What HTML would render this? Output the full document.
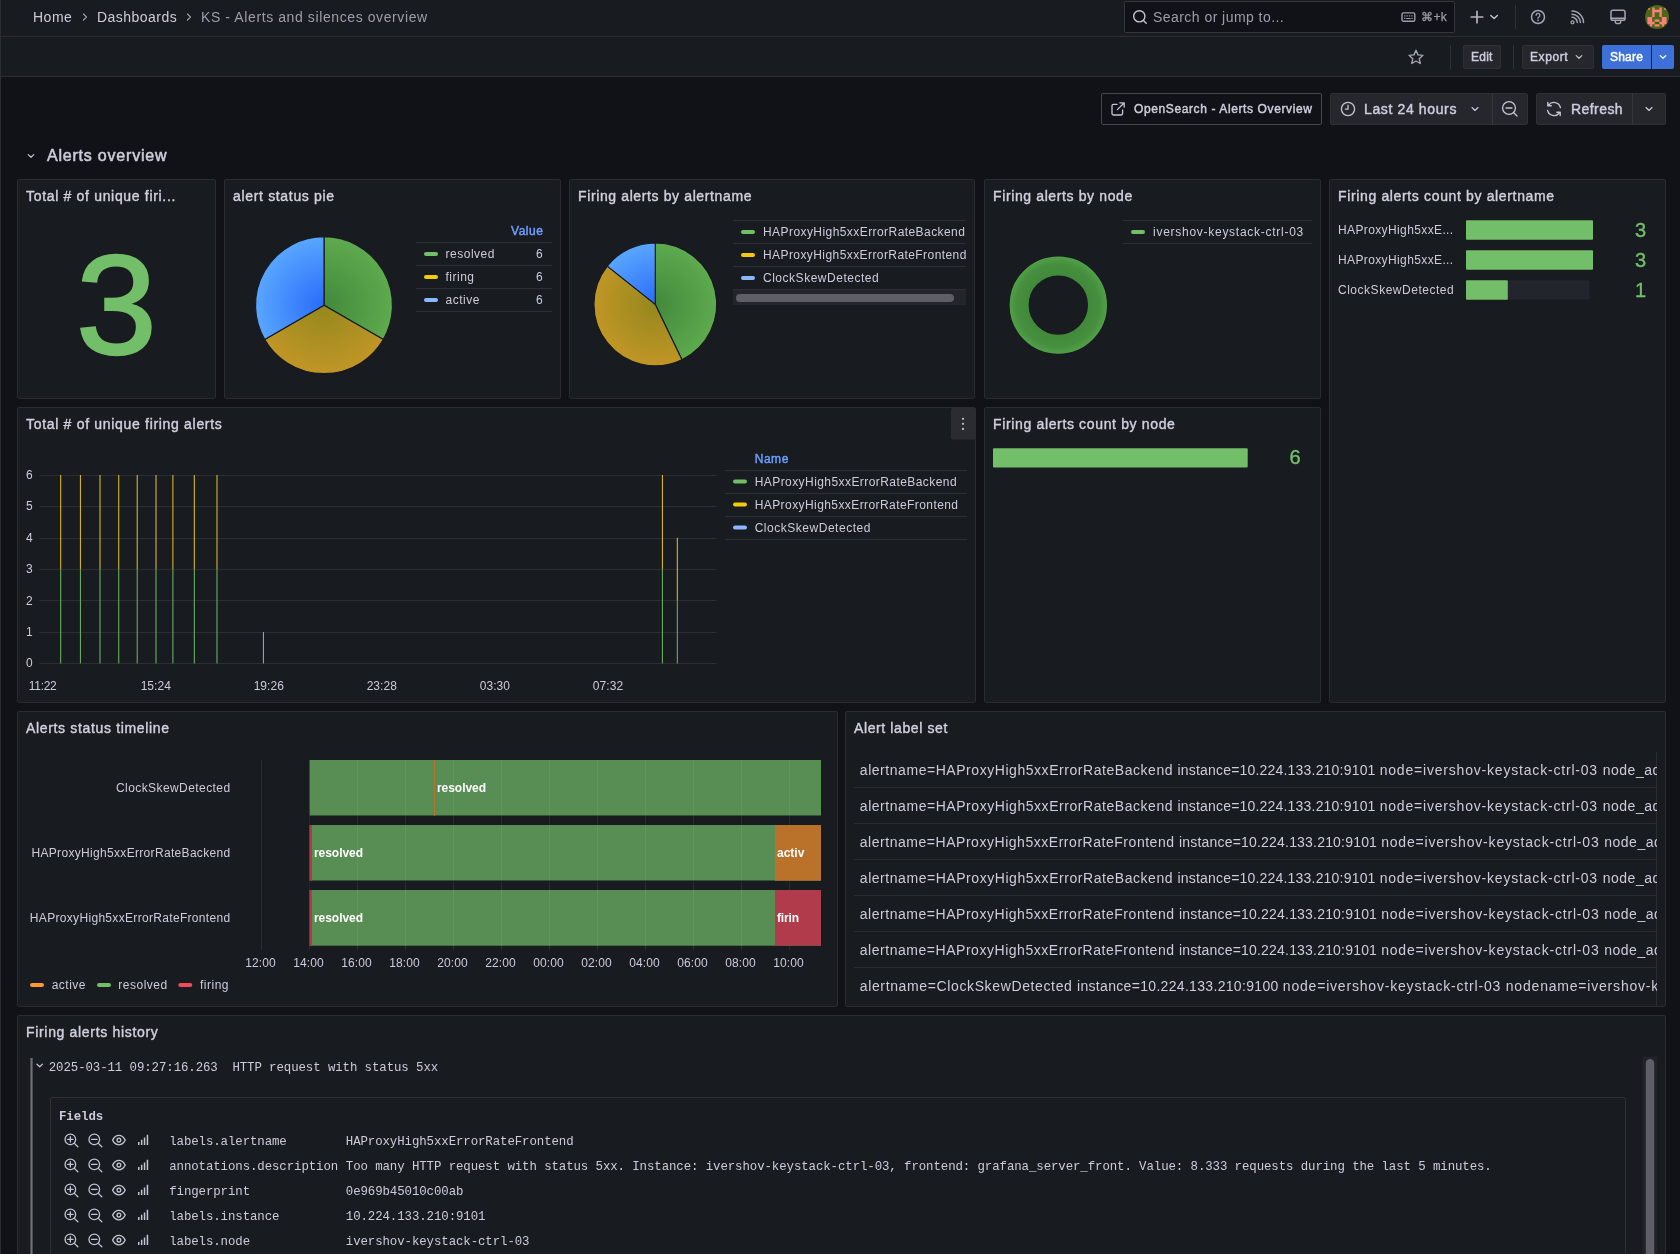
<!DOCTYPE html>
<html lang="en">
<head>
<meta charset="utf-8">
<title>KS - Alerts and silences overview</title>
<style>
*{box-sizing:border-box;margin:0;padding:0}
html,body{width:1680px;height:1254px;overflow:hidden;background:#111217;color:#ccccdc;
  font-family:"Liberation Sans",sans-serif;font-size:14px}
#root{position:relative;width:1680px;height:1254px;overflow:hidden;will-change:transform}
#leftline{position:absolute;left:0;top:0;width:1px;height:1254px;background:#2b2d33}
#topbar{position:absolute;left:1px;top:0;width:1679px;height:37px;background:#181b1f;border-bottom:1px solid #2c2e34}
#subbar{position:absolute;left:1px;top:37px;width:1679px;height:40px;background:#181b1f;border-bottom:1px solid #2c2e34}
.t{position:absolute;white-space:nowrap;line-height:1;color:#ccccdc}
.m{-webkit-text-stroke:0.450px currentColor}
.sec{color:#9d9eab}
.panel{position:absolute;background:#181b1f;border:1px solid #2a2c32;border-radius:2px;overflow:hidden}
.ptitle{position:absolute;left:8px;top:8px;font-size:14px;color:#d0d0de;white-space:nowrap;line-height:16px;-webkit-text-stroke:0.4px currentColor;letter-spacing:0.45px}
.btn{position:absolute;background:#25272d;border-radius:2px;border:1px solid #2e3036}
.vsep{position:absolute;width:1px;background:#2f3137}
svg{position:absolute;overflow:visible}
.ic{fill:none;stroke:#c4c5d4;stroke-width:1.4;stroke-linecap:round;stroke-linejoin:round}
.lr{letter-spacing:0.53px}
.mono{font-family:"Liberation Mono",monospace}
</style>
</head>
<body>
<div id="root">
<div id="leftline"></div>
<div id="topbar"></div>
<div id="subbar"></div>
<!-- breadcrumbs -->
<div class="t" style="left:33px;top:10px;font-size:14px;letter-spacing:0.5px">Home</div>
<svg style="left:80px;top:12px" width="10" height="10" viewBox="0 0 10 10"><path class="ic" style="stroke:#9d9eab;stroke-width:1.2" d="M3.5 2 L6.5 5 L3.5 8"/></svg>
<div class="t" style="left:97px;top:10px;font-size:14px;letter-spacing:0.47px">Dashboards</div>
<svg style="left:184px;top:12px" width="10" height="10" viewBox="0 0 10 10"><path class="ic" style="stroke:#9d9eab;stroke-width:1.2" d="M3.5 2 L6.5 5 L3.5 8"/></svg>
<div class="t sec" style="left:201px;top:10px;font-size:14px;letter-spacing:0.6px">KS - Alerts and silences overview</div>
<!-- search -->
<div style="position:absolute;left:1124px;top:1px;width:331px;height:32px;background:#111217;border:1px solid #34363d;border-radius:2px"></div>
<svg style="left:1132px;top:9px" width="16" height="16" viewBox="0 0 16 16"><circle class="ic" cx="7.3" cy="7.3" r="5.6"/><path class="ic" d="M11.5 11.5 L14.2 14.2"/></svg>
<div class="t sec" style="left:1153px;top:10px;font-size:14px;letter-spacing:0.45px">Search or jump to...</div>
<svg style="left:1400.600px;top:11px" width="16" height="12" viewBox="0 0 16 12"><rect class="ic" style="stroke:#9d9eab;stroke-width:1.400" x="1" y="1.900" width="12.800" height="8.400" rx="1.600"/><path class="ic" style="stroke:#9d9eab;stroke-width:1.100" d="M3.600 4.900h0.400M5.900 4.900h0.400M8.300 4.900h0.400M10.700 4.900h0.400M3.600 7.400h0.300M10.900 7.400h0.300M5.600 7.500h3.600"/></svg>
<div class="t sec" style="left:1421.400px;top:11px;font-size:12px;-webkit-text-stroke:0.250px currentColor;letter-spacing:0.23px">&#8984;+k</div>
<!-- plus -->
<svg style="left:0;top:0" width="1680" height="36" viewBox="0 0 1680 36"><g fill="none" stroke="#a3a4b1" stroke-width="1.500" stroke-linecap="round" stroke-linejoin="round">
<path stroke="#b4b5c3" stroke-width="1.700" d="M1477 11.300v11.400M1471.300 17h11.400"/>
<path stroke="#c4c5d4" stroke-width="1.400" d="M1490.800 15.400 L1494.100 18.600 L1497.400 15.400"/>
<circle cx="1538" cy="17" r="6.500"/>
<path stroke-width="1.300" d="M1536.100 15.300a1.900 1.900 0 1 1 2.800 1.700c-.6.300-.9.700-.9 1.300"/>
<circle cx="1572.500" cy="22.300" r="1.500" stroke-width="1.300"/>
<path stroke-width="1.500" d="M1572 17.300a5.300 5.300 0 0 1 5.300 5.300M1572 14.200a8.400 8.400 0 0 1 8.400 8.400M1572 11.100a11.500 11.500 0 0 1 11.500 11.500"/>
<rect x="1611" y="10.300" width="14" height="10" rx="1.800"/>
<path d="M1611 18.200h14M1615.300 20.500v1.600a1.300 1.300 0 0 0 1.300 1.300h2.800a1.300 1.300 0 0 0 1.300-1.300v-1.600"/>
</g><circle cx="1538" cy="20.400" r="0.850" fill="#a3a4b1"/></svg>
<div class="vsep" style="left:1515px;top:5px;height:24px"></div>
<!-- avatar -->
<svg style="left:1645px;top:5px" width="24" height="24" viewBox="0 0 24 24"><defs><clipPath id="avc"><circle cx="12" cy="12" r="12"/></clipPath></defs><g clip-path="url(#avc)"><rect width="24" height="24" fill="#4b6717"/><path fill="#2f6900" d="M9.600 16.800h4.800v2.400h-4.800z"/><path fill="#fa817b" d="M2.4 2.4h2.4v2.4h-2.4zM2.4 12.0h2.4v2.4h-2.4zM2.4 14.4h2.4v2.4h-2.4zM2.4 16.8h2.4v2.4h-2.4zM4.8 12.0h2.4v2.4h-2.4zM4.8 14.4h2.4v2.4h-2.4zM4.8 16.8h2.4v2.4h-2.4zM4.8 19.2h2.4v2.4h-2.4zM7.2 2.4h2.4v2.4h-2.4zM7.2 4.8h2.4v2.4h-2.4zM7.2 7.2h2.4v2.4h-2.4zM7.2 9.6h2.4v2.4h-2.4zM7.2 16.8h2.4v2.4h-2.4zM9.6 4.8h2.4v2.4h-2.4zM9.6 14.4h2.4v2.4h-2.4zM9.6 19.2h2.4v2.4h-2.4zM12.0 4.8h2.4v2.4h-2.4zM12.0 14.4h2.4v2.4h-2.4zM12.0 19.2h2.4v2.4h-2.4zM14.4 2.4h2.4v2.4h-2.4zM14.4 4.8h2.4v2.4h-2.4zM14.4 7.2h2.4v2.4h-2.4zM14.4 9.6h2.4v2.4h-2.4zM14.4 16.8h2.4v2.4h-2.4zM16.8 12.0h2.4v2.4h-2.4zM16.8 14.4h2.4v2.4h-2.4zM16.8 16.8h2.4v2.4h-2.4zM16.8 19.2h2.4v2.4h-2.4zM19.2 2.4h2.4v2.4h-2.4zM19.2 12.0h2.4v2.4h-2.4zM19.2 14.4h2.4v2.4h-2.4zM19.2 16.8h2.4v2.4h-2.4z"/></g></svg>
<!-- subbar -->
<svg style="left:1407px;top:48px" width="18" height="18" viewBox="0 0 18 18"><path class="ic" style="stroke-width:1.4;stroke:#a3a4b1" d="M9.00 2.30L11.00 6.85L15.94 7.34L12.23 10.65L13.29 15.51L9.00 13.00L4.71 15.51L5.77 10.65L2.06 7.34L7.00 6.85Z"/></svg>
<div class="vsep" style="left:1450px;top:45px;height:24px"></div>
<div class="btn" style="left:1463px;top:45px;width:38px;height:24px"></div>
<div class="t m" style="left:1471px;top:51px;font-size:12px;letter-spacing:0.23px">Edit</div>
<div class="vsep" style="left:1513px;top:45px;height:24px"></div>
<div class="btn" style="left:1522px;top:45px;width:72px;height:24px"></div>
<div class="t m" style="left:1530px;top:51px;font-size:12px;letter-spacing:0.58px">Export</div>
<svg style="left:1574px;top:52px" width="10" height="10" viewBox="0 0 10 10"><path class="ic" style="stroke-width:1.2" d="M2.2 3.6 L5 6.3 L7.800 3.6"/></svg>
<div class="btn" style="left:1602px;top:45px;width:49px;height:24px;background:#3d71d9;border:none;border-radius:2px 0 0 2px"></div>
<div class="t m" style="left:1610px;top:51px;font-size:12px;color:#fff;letter-spacing:0.2px">Share</div>
<div class="btn" style="left:1652px;top:45px;width:22px;height:24px;background:#3d71d9;border:none;border-radius:0 2px 2px 0"></div>
<svg style="left:1658px;top:52px" width="10" height="10" viewBox="0 0 10 10"><path class="ic" style="stroke:#fff;stroke-width:1.3" d="M2.2 3.6 L5 6.3 L7.800 3.6"/></svg>
<!-- controls row -->
<div style="position:absolute;left:1101px;top:93px;width:221px;height:32px;border:1px solid #45474f;border-radius:2px"></div>
<svg style="left:1110px;top:101px" width="16" height="16" viewBox="0 0 16 16"><path class="ic" style="stroke-width:1.3" d="M12.6 9v3.600a1.4 1.400 0 0 1-1.400 1.400H3.400A1.400 1.400 0 0 1 2 12.600V4.800a1.400 1.400 0 0 1 1.400-1.400H7M9.800 1.800h4.400v4.400M14 2 7.400 8.600"/></svg>
<div class="t m" style="left:1134px;top:103px;font-size:12px;letter-spacing:0.61px">OpenSearch - Alerts Overview</div>
<div class="btn" style="left:1330px;top:93px;width:198px;height:32px"></div>
<div class="vsep" style="left:1492px;top:93px;height:32px;background:#34363d"></div>
<svg style="left:1340px;top:101px" width="16" height="16" viewBox="0 0 16 16"><circle class="ic" style="stroke-width:1.3" cx="8" cy="8" r="6.600"/><path class="ic" style="stroke-width:1.3" d="M8 4.200V8.200H5.400"/></svg>
<div class="t m" style="left:1364px;top:102px;font-size:14px;letter-spacing:0.63px">Last 24 hours</div>
<svg style="left:1470px;top:104px" width="10" height="10" viewBox="0 0 10 10"><path class="ic" style="stroke-width:1.3" d="M2 3.600 L5 6.400 L8 3.600"/></svg>
<svg style="left:1501px;top:100px" width="18" height="18" viewBox="0 0 18 18"><circle class="ic" style="stroke-width:1.3" cx="8" cy="8" r="6.400"/><path class="ic" style="stroke-width:1.3" d="M5 8h6M12.800 12.800 16 16"/></svg>
<div class="btn" style="left:1536px;top:93px;width:130px;height:32px"></div>
<div class="vsep" style="left:1632px;top:93px;height:32px;background:#34363d"></div>
<svg style="left:1545px;top:100px" width="18" height="18" viewBox="0 0 18 18"><path class="ic" style="stroke-width:1.4" d="M15.400 7.600A6.600 6.600 0 0 0 3.600 5.200M2.800 2.400v3.400h3.400M2.600 10.400a6.600 6.600 0 0 0 11.800 2.400M15.200 15.600v-3.400h-3.400"/></svg>
<div class="t m" style="left:1571px;top:102px;font-size:14px;letter-spacing:0.44px">Refresh</div>
<svg style="left:1644px;top:104px" width="10" height="10" viewBox="0 0 10 10"><path class="ic" style="stroke-width:1.3" d="M2 3.600 L5 6.400 L8 3.600"/></svg>
<!-- row title -->
<svg style="left:26px;top:151px" width="10" height="10" viewBox="0 0 10 10"><path class="ic" style="stroke-width:1.2" d="M2.200 3.600 L5 6.300 L7.800 3.600"/></svg>
<div class="t" style="-webkit-text-stroke:0.550px currentColor;left:47px;top:148px;font-size:16px;letter-spacing:0.79px">Alerts overview</div>
<div class="panel" id="p1" style="left:17px;top:179px;width:199px;height:220px"><div class="ptitle" style="letter-spacing:0.68px">Total # of unique firi...</div></div>
<div class="panel" id="p2" style="left:224px;top:179px;width:337px;height:220px"><div class="ptitle" style="letter-spacing:0.67px">alert status pie</div></div>
<div class="panel" id="p3" style="left:569px;top:179px;width:406px;height:220px"><div class="ptitle" style="letter-spacing:0.62px">Firing alerts by alertname</div></div>
<div class="panel" id="p4" style="left:984px;top:179px;width:337px;height:220px"><div class="ptitle" style="letter-spacing:0.62px">Firing alerts by node</div></div>
<div class="panel" id="p5" style="left:1329px;top:179px;width:337px;height:524px"><div class="ptitle" style="letter-spacing:0.645px">Firing alerts count by alertname</div></div>
<div class="panel" id="p6" style="left:17px;top:407px;width:959px;height:296px"><div class="ptitle" style="letter-spacing:0.69px">Total # of unique firing alerts</div></div>
<div class="panel" id="p7" style="left:984px;top:407px;width:337px;height:296px"><div class="ptitle" style="letter-spacing:0.65px">Firing alerts count by node</div></div>
<div class="panel" id="p8" style="left:17px;top:711px;width:821px;height:296px"><div class="ptitle" style="letter-spacing:0.66px">Alerts status timeline</div></div>
<div class="panel" id="p9" style="left:845px;top:711px;width:821px;height:296px"><div class="ptitle" style="letter-spacing:0.61px">Alert label set</div></div>
<div class="panel" id="p10" style="left:17px;top:1015px;width:1649px;height:260px"><div class="ptitle" style="letter-spacing:0.675px">Firing alerts history</div></div>
<!-- P1 stat -->
<div class="t" id="big3" style="left:76.300px;top:235px;font-size:141px;color:#73bf69;width:81px;text-align:center;transform:scaleX(1.03);transform-origin:50% 50%;-webkit-text-stroke:2.4px #73bf69">3</div>
<!-- P2 pie -->
<svg style="left:0;top:0" width="1680" height="420" viewBox="0 0 1680 420">
<defs>
<radialGradient id="gG2" gradientUnits="userSpaceOnUse" cx="324" cy="305.2" r="68.5"><stop offset="0" stop-color="#42893b"/><stop offset="1" stop-color="#5eaa4e"/></radialGradient>
<radialGradient id="gY2" gradientUnits="userSpaceOnUse" cx="324" cy="305.2" r="68.5"><stop offset="0" stop-color="#95871d"/><stop offset="1" stop-color="#c09626"/></radialGradient>
<radialGradient id="gB2" gradientUnits="userSpaceOnUse" cx="324" cy="305.2" r="68.5"><stop offset="0" stop-color="#2a6bfa"/><stop offset="1" stop-color="#58a6ff"/></radialGradient>
<radialGradient id="gG3" gradientUnits="userSpaceOnUse" cx="655.3" cy="304.4" r="61.4"><stop offset="0" stop-color="#42893b"/><stop offset="1" stop-color="#5eaa4e"/></radialGradient>
<radialGradient id="gY3" gradientUnits="userSpaceOnUse" cx="655.3" cy="304.4" r="61.4"><stop offset="0" stop-color="#95871d"/><stop offset="1" stop-color="#c09626"/></radialGradient>
<radialGradient id="gB3" gradientUnits="userSpaceOnUse" cx="655.3" cy="304.4" r="61.4"><stop offset="0" stop-color="#2a6bfa"/><stop offset="1" stop-color="#58a6ff"/></radialGradient>
<radialGradient id="gD4" gradientUnits="userSpaceOnUse" cx="1058.1" cy="305.2" r="48.8"><stop offset="0.62" stop-color="#418a3b"/><stop offset="0.85" stop-color="#468f3f"/><stop offset="1" stop-color="#52a048"/></radialGradient>
</defs>
<g stroke="#181b1f" stroke-width="1.2" stroke-linejoin="round">
<path fill="url(#gG2)" d="M324 305.2L324.00 236.70A68.5 68.5 0 0 1 383.32 339.45Z"/>
<path fill="url(#gY2)" d="M324 305.2L383.32 339.45A68.5 68.5 0 0 1 264.68 339.45Z"/>
<path fill="url(#gB2)" d="M324 305.2L264.68 339.45A68.5 68.5 0 0 1 324.00 236.70Z"/>
<path fill="url(#gG3)" d="M655.3 304.4L655.30 243.00A61.4 61.4 0 0 1 681.94 359.72Z"/>
<path fill="url(#gY3)" d="M655.3 304.4L681.94 359.72A61.4 61.4 0 0 1 607.30 266.12Z"/>
<path fill="url(#gB3)" d="M655.3 304.4L607.30 266.12A61.4 61.4 0 0 1 655.30 243.00Z"/>
</g>
<circle cx="1058.300" cy="305.100" r="39.200" fill="none" stroke="url(#gD4)" stroke-width="19"/>
<!-- legend lines -->
<g stroke="#2d2f35" stroke-width="1">
<path d="M416 242.5H552M416 265.5H552M416 288.5H552M416 311.5H552"/>
<path d="M733 220.5H966M733 243.5H966M733 266.5H966M733 289.5H966"/>
<path d="M1123 220.5H1312M1123 243.5H1312"/>
</g>
<!-- legend markers -->
<g>
<rect x="424" y="252" width="14" height="4" rx="2" fill="#73bf69"/>
<rect x="424" y="275" width="14" height="4" rx="2" fill="#f2cc0c"/>
<rect x="424" y="298" width="14" height="4" rx="2" fill="#8ab8ff"/>
<rect x="741" y="230" width="14" height="4" rx="2" fill="#73bf69"/>
<rect x="741" y="253" width="14" height="4" rx="2" fill="#f2cc0c"/>
<rect x="741" y="276" width="14" height="4" rx="2" fill="#8ab8ff"/>
<rect x="1131" y="230" width="14" height="4" rx="2" fill="#73bf69"/>
</g>
<!-- p3 scrollbar -->
<rect x="733" y="290" width="233" height="15" fill="#22252a"/>
<rect x="736" y="294" width="218" height="8" rx="4" fill="#5e5f66"/>
<!-- P5 bars -->
<rect x="1466" y="220.300" width="127" height="19.400" rx="1" fill="#73bf69"/>
<rect x="1466" y="250.300" width="127" height="19.400" rx="1" fill="#73bf69"/>
<rect x="1466" y="280.300" width="123.600" height="19.400" rx="1" fill="#22252b"/>
<rect x="1466" y="280.300" width="41.800" height="19.400" rx="1" fill="#73bf69"/>
</svg>
<!-- P2 legend text -->
<div class="t m" style="left:511px;top:225px;font-size:12px;color:#6e9fff;letter-spacing:0.54px">Value</div>
<div class="t" style="left:445.500px;top:248px;font-size:12px;letter-spacing:0.51px">resolved</div>
<div class="t" style="left:445.500px;top:271px;font-size:12px;letter-spacing:0.5px">firing</div>
<div class="t" style="left:445.500px;top:294px;font-size:12px;letter-spacing:0.5px">active</div>
<div class="t" style="left:536px;top:248px;font-size:12px">6</div>
<div class="t" style="left:536px;top:271px;font-size:12px">6</div>
<div class="t" style="left:536px;top:294px;font-size:12px">6</div>
<!-- P3 legend text -->
<div class="t" style="left:763px;top:226px;font-size:12px;letter-spacing:0.43px">HAProxyHigh5xxErrorRateBackend</div>
<div class="t" style="left:763px;top:249px;font-size:12px;letter-spacing:0.42px">HAProxyHigh5xxErrorRateFrontend</div>
<div class="t" style="left:763px;top:272px;font-size:12px;letter-spacing:0.52px">ClockSkewDetected</div>
<!-- P4 legend text -->
<div class="t" style="left:1153px;top:226px;font-size:12px;letter-spacing:0.73px">ivershov-keystack-ctrl-03</div>
<!-- P5 labels -->
<div class="t" style="left:1338px;top:224px;font-size:12px;letter-spacing:0.38px">HAProxyHigh5xxE...</div>
<div class="t" style="left:1338px;top:254px;font-size:12px;letter-spacing:0.38px">HAProxyHigh5xxE...</div>
<div class="t" style="left:1338px;top:284px;font-size:12px;letter-spacing:0.52px">ClockSkewDetected</div>
<div class="t" style="left:1625px;top:219.500px;font-size:20px;color:#73bf69;-webkit-text-stroke:0.4px #73bf69;width:21px;text-align:right">3</div>
<div class="t" style="left:1625px;top:249.500px;font-size:20px;color:#73bf69;-webkit-text-stroke:0.4px #73bf69;width:21px;text-align:right">3</div>
<div class="t" style="left:1625px;top:279.500px;font-size:20px;color:#73bf69;-webkit-text-stroke:0.4px #73bf69;width:21px;text-align:right">1</div>
<!-- P6 timeseries -->
<svg style="left:0;top:0" width="1680" height="710" viewBox="0 0 1680 710">
<path d="M39.500 663.5H716.500M39.500 632.5H716.500M39.500 600.5H716.500M39.500 569.5H716.500M39.500 538.5H716.500M39.500 506.5H716.500M39.500 475.5H716.500" stroke="#2c2e34" stroke-width="1" fill="none"/>
<rect x="60.20" y="569.20" width="1" height="94.20" fill="#70bb66"/>
<rect x="60.20" y="475.00" width="1" height="94.20" fill="#e6c42a"/>
<rect x="79.90" y="569.20" width="1" height="94.20" fill="#70bb66"/>
<rect x="79.90" y="475.00" width="1" height="94.20" fill="#e6c42a"/>
<rect x="99.50" y="569.20" width="1" height="94.20" fill="#70bb66"/>
<rect x="99.50" y="475.00" width="1" height="94.20" fill="#e6c42a"/>
<rect x="118.25" y="569.20" width="1" height="94.20" fill="#70bb66"/>
<rect x="118.25" y="475.00" width="1" height="94.20" fill="#e6c42a"/>
<rect x="136.70" y="569.20" width="1" height="94.20" fill="#70bb66"/>
<rect x="136.70" y="475.00" width="1" height="94.20" fill="#e6c42a"/>
<rect x="155.50" y="569.20" width="1" height="94.20" fill="#70bb66"/>
<rect x="155.50" y="475.00" width="1" height="94.20" fill="#e6c42a"/>
<rect x="172.40" y="569.20" width="1" height="94.20" fill="#70bb66"/>
<rect x="172.40" y="475.00" width="1" height="94.20" fill="#e6c42a"/>
<rect x="193.80" y="569.20" width="1" height="94.20" fill="#70bb66"/>
<rect x="193.80" y="475.00" width="1" height="94.20" fill="#e6c42a"/>
<rect x="216.50" y="569.20" width="1" height="94.20" fill="#70bb66"/>
<rect x="216.50" y="475.00" width="1" height="94.20" fill="#e6c42a"/>
<rect x="262.9" y="632.00" width="1" height="31.40" fill="#84b1f6"/>
<rect x="661.9" y="569.20" width="1" height="94.20" fill="#70bb66"/>
<rect x="661.9" y="475.00" width="1" height="94.20" fill="#e6c42a"/>
<rect x="676.8" y="600.60" width="1" height="62.80" fill="#70bb66"/>
<rect x="676.8" y="537.80" width="1" height="62.80" fill="#e6c42a"/>
<path d="M725 470.500H967M725 493.500H967M725 516.500H967M725 539.500H967" stroke="#2d2f35" stroke-width="1" fill="none"/>
<rect x="733" y="479.500" width="14" height="4" rx="2" fill="#73bf69"/>
<rect x="733" y="502.500" width="14" height="4" rx="2" fill="#f2cc0c"/>
<rect x="733" y="525.500" width="14" height="4" rx="2" fill="#8ab8ff"/>
<rect x="951" y="408" width="24.500" height="31.500" rx="2" fill="#2a2c32"/>
<circle cx="963" cy="418.800" r="1.100" fill="#c4c5d4"/><circle cx="963" cy="423.800" r="1.100" fill="#c4c5d4"/><circle cx="963" cy="428.900" r="1.100" fill="#c4c5d4"/>
<rect x="993" y="448.200" width="254.700" height="19.400" rx="1" fill="#73bf69"/>
</svg>
<div class="t" style="left:26px;top:657.4px;font-size:12px">0</div>
<div class="t" style="left:26px;top:626.0px;font-size:12px">1</div>
<div class="t" style="left:26px;top:594.6px;font-size:12px">2</div>
<div class="t" style="left:26px;top:563.2px;font-size:12px">3</div>
<div class="t" style="left:26px;top:531.8px;font-size:12px">4</div>
<div class="t" style="left:26px;top:500.4px;font-size:12px">5</div>
<div class="t" style="left:26px;top:469.0px;font-size:12px">6</div>
<div class="t" style="left:22.7px;top:680px;width:40px;text-align:center;font-size:12px;letter-spacing:-0.3px">11:22</div>
<div class="t" style="left:135.8px;top:680px;width:40px;text-align:center;font-size:12px;letter-spacing:0.06px">15:24</div>
<div class="t" style="left:248.8px;top:680px;width:40px;text-align:center;font-size:12px;letter-spacing:0.06px">19:26</div>
<div class="t" style="left:361.8px;top:680px;width:40px;text-align:center;font-size:12px;letter-spacing:0.06px">23:28</div>
<div class="t" style="left:474.9px;top:680px;width:40px;text-align:center;font-size:12px;letter-spacing:0.06px">03:30</div>
<div class="t" style="left:588.0px;top:680px;width:40px;text-align:center;font-size:12px;letter-spacing:0.06px">07:32</div>
<div class="t m" style="left:754.700px;top:453px;font-size:12px;color:#6e9fff;letter-spacing:0.54px">Name</div>
<div class="t" style="left:754.700px;top:476px;font-size:12px;letter-spacing:0.43px">HAProxyHigh5xxErrorRateBackend</div>
<div class="t" style="left:754.700px;top:499px;font-size:12px;letter-spacing:0.42px">HAProxyHigh5xxErrorRateFrontend</div>
<div class="t" style="left:754.700px;top:522px;font-size:12px;letter-spacing:0.52px">ClockSkewDetected</div>
<div class="t" style="left:1282px;top:447px;font-size:20px;color:#73bf69;-webkit-text-stroke:0.4px #73bf69;width:18.500px;text-align:right">6</div>
<!-- P8 timeline -->
<svg style="left:0;top:0" width="1680" height="1010" viewBox="0 0 1680 1010">
<path d="M261.5 760V950M309.5 760V950M357.5 760V950M405.5 760V950M453.5 760V950M501.5 760V950M549.5 760V950M597.5 760V950M645.5 760V950M693.5 760V950M741.5 760V950M789.5 760V950" stroke="#2a2c32" stroke-width="1" fill="none"/>
<rect x="309.7" y="760" width="511.3" height="55.7" fill="#588e53"/>
<rect x="309.7" y="825" width="511.3" height="55.7" fill="#588e53"/>
<rect x="309.7" y="890" width="511.3" height="55.7" fill="#588e53"/>
<path d="M357.5 760V946M405.5 760V946M453.5 760V946M501.5 760V946M549.5 760V946M597.5 760V946M645.5 760V946M693.5 760V946M741.5 760V946M789.5 760V946" stroke="#ffffff" stroke-opacity="0.07" stroke-width="1" fill="none"/>
<rect x="309.7" y="815.700" width="511.3" height="9.300" fill="#181b1f"/>
<rect x="309.7" y="880.700" width="511.3" height="9.300" fill="#181b1f"/>
<path d="M357.5 815.700V825M357.5 880.700V890M405.5 815.700V825M405.5 880.700V890M453.5 815.700V825M453.5 880.700V890M501.5 815.700V825M501.5 880.700V890M549.5 815.700V825M549.5 880.700V890M597.5 815.700V825M597.5 880.700V890M645.5 815.700V825M645.5 880.700V890M693.5 815.700V825M693.5 880.700V890M741.5 815.700V825M741.5 880.700V890M789.5 815.700V825M789.5 880.700V890" stroke="#2a2c32" stroke-width="1" fill="none"/>
<rect x="434" y="760" width="1" height="55.700" fill="#ba722b"/>
<rect x="309.700" y="825" width="2.300" height="55.700" fill="#b13b4a"/>
<rect x="309.700" y="890" width="2.300" height="55.700" fill="#b13b4a"/>
<rect x="775" y="825" width="46" height="55.700" fill="#ba722b"/>
<rect x="775" y="890" width="46" height="55.700" fill="#b13b4a"/>
<rect x="30" y="983" width="14" height="4" rx="2" fill="#ff9830"/>
<rect x="97" y="983" width="14" height="4" rx="2" fill="#73bf69"/>
<rect x="178.300" y="983" width="14" height="4" rx="2" fill="#f2495c"/>
<path d="M854 787.5H1657M854 823.5H1657M854 859.5H1657M854 895.5H1657M854 931.5H1657M854 967.5H1657M1656.500 752V1007" stroke="#2a2c32" stroke-width="1" fill="none"/>
</svg>
<div class="t" style="left:0px;width:230.500px;text-align:right;top:781.7px;font-size:12px;letter-spacing:0.42px">ClockSkewDetected</div>
<div class="t" style="left:0px;width:230.500px;text-align:right;top:846.7px;font-size:12px;letter-spacing:0.32px">HAProxyHigh5xxErrorRateBackend</div>
<div class="t" style="left:0px;width:230.500px;text-align:right;top:911.7px;font-size:12px;letter-spacing:0.32px">HAProxyHigh5xxErrorRateFrontend</div>
<div class="t" style="left:240.5px;width:40px;text-align:center;top:957px;font-size:12px;letter-spacing:0.06px">12:00</div>
<div class="t" style="left:288.5px;width:40px;text-align:center;top:957px;font-size:12px;letter-spacing:0.06px">14:00</div>
<div class="t" style="left:336.5px;width:40px;text-align:center;top:957px;font-size:12px;letter-spacing:0.06px">16:00</div>
<div class="t" style="left:384.5px;width:40px;text-align:center;top:957px;font-size:12px;letter-spacing:0.06px">18:00</div>
<div class="t" style="left:432.5px;width:40px;text-align:center;top:957px;font-size:12px;letter-spacing:0.06px">20:00</div>
<div class="t" style="left:480.5px;width:40px;text-align:center;top:957px;font-size:12px;letter-spacing:0.06px">22:00</div>
<div class="t" style="left:528.5px;width:40px;text-align:center;top:957px;font-size:12px;letter-spacing:0.06px">00:00</div>
<div class="t" style="left:576.5px;width:40px;text-align:center;top:957px;font-size:12px;letter-spacing:0.06px">02:00</div>
<div class="t" style="left:624.5px;width:40px;text-align:center;top:957px;font-size:12px;letter-spacing:0.06px">04:00</div>
<div class="t" style="left:672.5px;width:40px;text-align:center;top:957px;font-size:12px;letter-spacing:0.06px">06:00</div>
<div class="t" style="left:720.5px;width:40px;text-align:center;top:957px;font-size:12px;letter-spacing:0.06px">08:00</div>
<div class="t" style="left:768.5px;width:40px;text-align:center;top:957px;font-size:12px;letter-spacing:0.06px">10:00</div>
<div class="t" style="left:437px;top:781.7px;font-size:12px;font-weight:bold;color:#fff;letter-spacing:-0.05px">resolved</div>
<div class="t" style="left:314px;top:846.7px;font-size:12px;font-weight:bold;color:#fff;letter-spacing:-0.05px">resolved</div>
<div class="t" style="left:314px;top:911.7px;font-size:12px;font-weight:bold;color:#fff;letter-spacing:-0.05px">resolved</div>
<div class="t" style="left:777px;top:846.7px;font-size:12px;font-weight:bold;color:#fff;letter-spacing:0px">activ</div>
<div class="t" style="left:777px;top:911.7px;font-size:12px;font-weight:bold;color:#fff;letter-spacing:-0.15px">firin</div>
<div class="t" style="left:51.700px;top:979px;font-size:12px;letter-spacing:0.5px">active</div>
<div class="t" style="left:118.300px;top:979px;font-size:12px;letter-spacing:0.51px">resolved</div>
<div class="t" style="left:200px;top:979px;font-size:12px;letter-spacing:0.5px">firing</div>
<div style="position:absolute;left:854px;top:752px;width:802.500px;height:255px;overflow:hidden">
<div class="t lr" style="left:5.800px;top:11.3px;font-size:14px;white-space:pre"><span style="letter-spacing:0.546px">alertname=HAProxyHigh5xxErrorRateBackend </span><span style="letter-spacing:0.194px">instance=10.224.133.210:9101 </span><span style="letter-spacing:0.805px">node=ivershov-keystack-ctrl-03 </span>node_address=10.224.133.210</div>
<div class="t lr" style="left:5.800px;top:47.3px;font-size:14px;white-space:pre"><span style="letter-spacing:0.546px">alertname=HAProxyHigh5xxErrorRateBackend </span><span style="letter-spacing:0.194px">instance=10.224.133.210:9101 </span><span style="letter-spacing:0.805px">node=ivershov-keystack-ctrl-03 </span>node_address=10.224.133.210</div>
<div class="t lr" style="left:5.800px;top:83.3px;font-size:14px;white-space:pre"><span style="letter-spacing:0.532px">alertname=HAProxyHigh5xxErrorRateFrontend </span><span style="letter-spacing:0.194px">instance=10.224.133.210:9101 </span><span style="letter-spacing:0.805px">node=ivershov-keystack-ctrl-03 </span>node_address=10.224.133.210</div>
<div class="t lr" style="left:5.800px;top:119.3px;font-size:14px;white-space:pre"><span style="letter-spacing:0.546px">alertname=HAProxyHigh5xxErrorRateBackend </span><span style="letter-spacing:0.194px">instance=10.224.133.210:9101 </span><span style="letter-spacing:0.805px">node=ivershov-keystack-ctrl-03 </span>node_address=10.224.133.210</div>
<div class="t lr" style="left:5.800px;top:155.3px;font-size:14px;white-space:pre"><span style="letter-spacing:0.532px">alertname=HAProxyHigh5xxErrorRateFrontend </span><span style="letter-spacing:0.194px">instance=10.224.133.210:9101 </span><span style="letter-spacing:0.805px">node=ivershov-keystack-ctrl-03 </span>node_address=10.224.133.210</div>
<div class="t lr" style="left:5.800px;top:191.3px;font-size:14px;white-space:pre"><span style="letter-spacing:0.532px">alertname=HAProxyHigh5xxErrorRateFrontend </span><span style="letter-spacing:0.194px">instance=10.224.133.210:9101 </span><span style="letter-spacing:0.805px">node=ivershov-keystack-ctrl-03 </span>node_address=10.224.133.210</div>
<div class="t lr" style="left:5.800px;top:227.3px;font-size:14px;white-space:pre"><span style="letter-spacing:0.628px">alertname=ClockSkewDetected </span><span style="letter-spacing:0.319px">instance=10.224.133.210:9100 </span><span style="letter-spacing:0.805px">node=ivershov-keystack-ctrl-03 </span><span style="letter-spacing:0.800px">nodename=ivershov-keystack-ctrl-03</span></div>
</div>
<!-- P10 logs -->
<svg style="left:0;top:0" width="1680" height="1254" viewBox="0 0 1680 1254">
<rect x="30.400" y="1058" width="2.200" height="200" fill="#6f7078"/>
<path class="ic" style="stroke-width:1.2" d="M37 1064.200 L39.700 1066.800 L42.400 1064.200"/>
<rect x="50.500" y="1097.500" width="1575" height="170" rx="2" fill="none" stroke="#2f3137" stroke-width="1"/>
<rect x="1642.500" y="1056.500" width="14.500" height="200" fill="#202329"/>
<rect x="1645.800" y="1059" width="8.400" height="210" rx="4.200" fill="#5e5f66"/>
<g class="ic" style="stroke-width:1.300" transform="translate(70.350 1139.4)"><circle cx="0" cy="0" r="5.300"/><path d="M-2.700 0h5.400M0 -2.700v5.400M4 4 7.500 7.300"/></g>
<g class="ic" style="stroke-width:1.300" transform="translate(94.300 1139.4)"><circle cx="0" cy="0" r="5.300"/><path d="M-2.700 0h5.400M4 4 7.500 7.300"/></g>
<g class="ic" style="stroke-width:1.300" transform="translate(118.900 1140.1000000000001)"><path d="M-6.300 0C-4.700 -3.100 -2.500 -4.700 0 -4.700S4.700 -3.100 6.300 0C4.700 3.100 2.500 4.700 0 4.700S-4.700 3.100 -6.300 0Z"/><circle cx="0" cy="0" r="1.900"/></g>
<g class="ic" style="stroke-width:1.500;stroke-linecap:butt" transform="translate(143 1140.4)"><path d="M-4.250 4.700v-3.200M-1.350 4.700v-5.300M1.550 4.700v-7.500M4.450 4.700v-10.300"/></g>
<g class="ic" style="stroke-width:1.300" transform="translate(70.350 1164.4)"><circle cx="0" cy="0" r="5.300"/><path d="M-2.700 0h5.400M0 -2.700v5.400M4 4 7.500 7.300"/></g>
<g class="ic" style="stroke-width:1.300" transform="translate(94.300 1164.4)"><circle cx="0" cy="0" r="5.300"/><path d="M-2.700 0h5.400M4 4 7.500 7.300"/></g>
<g class="ic" style="stroke-width:1.300" transform="translate(118.900 1165.1000000000001)"><path d="M-6.300 0C-4.700 -3.100 -2.500 -4.700 0 -4.700S4.700 -3.100 6.300 0C4.700 3.100 2.500 4.700 0 4.700S-4.700 3.100 -6.300 0Z"/><circle cx="0" cy="0" r="1.900"/></g>
<g class="ic" style="stroke-width:1.500;stroke-linecap:butt" transform="translate(143 1165.4)"><path d="M-4.250 4.700v-3.200M-1.350 4.700v-5.300M1.550 4.700v-7.500M4.450 4.700v-10.300"/></g>
<g class="ic" style="stroke-width:1.300" transform="translate(70.350 1189.4)"><circle cx="0" cy="0" r="5.300"/><path d="M-2.700 0h5.400M0 -2.700v5.400M4 4 7.500 7.300"/></g>
<g class="ic" style="stroke-width:1.300" transform="translate(94.300 1189.4)"><circle cx="0" cy="0" r="5.300"/><path d="M-2.700 0h5.400M4 4 7.500 7.300"/></g>
<g class="ic" style="stroke-width:1.300" transform="translate(118.900 1190.1000000000001)"><path d="M-6.300 0C-4.700 -3.100 -2.500 -4.700 0 -4.700S4.700 -3.100 6.300 0C4.700 3.100 2.500 4.700 0 4.700S-4.700 3.100 -6.300 0Z"/><circle cx="0" cy="0" r="1.900"/></g>
<g class="ic" style="stroke-width:1.500;stroke-linecap:butt" transform="translate(143 1190.4)"><path d="M-4.250 4.700v-3.200M-1.350 4.700v-5.300M1.550 4.700v-7.500M4.450 4.700v-10.300"/></g>
<g class="ic" style="stroke-width:1.300" transform="translate(70.350 1214.4)"><circle cx="0" cy="0" r="5.300"/><path d="M-2.700 0h5.400M0 -2.700v5.400M4 4 7.500 7.300"/></g>
<g class="ic" style="stroke-width:1.300" transform="translate(94.300 1214.4)"><circle cx="0" cy="0" r="5.300"/><path d="M-2.700 0h5.400M4 4 7.500 7.300"/></g>
<g class="ic" style="stroke-width:1.300" transform="translate(118.900 1215.1000000000001)"><path d="M-6.300 0C-4.700 -3.100 -2.500 -4.700 0 -4.700S4.700 -3.100 6.300 0C4.700 3.100 2.500 4.700 0 4.700S-4.700 3.100 -6.300 0Z"/><circle cx="0" cy="0" r="1.900"/></g>
<g class="ic" style="stroke-width:1.500;stroke-linecap:butt" transform="translate(143 1215.4)"><path d="M-4.250 4.700v-3.200M-1.350 4.700v-5.300M1.550 4.700v-7.500M4.450 4.700v-10.300"/></g>
<g class="ic" style="stroke-width:1.300" transform="translate(70.350 1239.4)"><circle cx="0" cy="0" r="5.300"/><path d="M-2.700 0h5.400M0 -2.700v5.400M4 4 7.500 7.300"/></g>
<g class="ic" style="stroke-width:1.300" transform="translate(94.300 1239.4)"><circle cx="0" cy="0" r="5.300"/><path d="M-2.700 0h5.400M4 4 7.500 7.300"/></g>
<g class="ic" style="stroke-width:1.300" transform="translate(118.900 1240.1000000000001)"><path d="M-6.300 0C-4.700 -3.100 -2.500 -4.700 0 -4.700S4.700 -3.100 6.300 0C4.700 3.100 2.500 4.700 0 4.700S-4.700 3.100 -6.300 0Z"/><circle cx="0" cy="0" r="1.900"/></g>
<g class="ic" style="stroke-width:1.500;stroke-linecap:butt" transform="translate(143 1240.4)"><path d="M-4.250 4.700v-3.200M-1.350 4.700v-5.300M1.550 4.700v-7.500M4.450 4.700v-10.300"/></g>
</svg>
<div class="t mono" style="left:48.750px;top:1061.500px;font-size:12.400px;letter-spacing:-0.090px;white-space:pre">2025-03-11 09:27:16.263  HTTP request with status 5xx</div>
<div class="t mono" style="left:59px;top:1110.9px;font-size:12.400px;font-weight:bold;letter-spacing:-0.090px">Fields</div>
<div class="t mono" style="left:169.200px;top:1135.9px;font-size:12.400px;letter-spacing:-0.090px">labels.alertname</div>
<div class="t mono" style="left:345.800px;top:1135.9px;font-size:12.400px;letter-spacing:-0.090px">HAProxyHigh5xxErrorRateFrontend</div>
<div class="t mono" style="left:169.200px;top:1160.9px;font-size:12.400px;letter-spacing:-0.090px">annotations.description</div>
<div class="t mono" style="left:345.800px;top:1160.9px;font-size:12.400px;letter-spacing:-0.090px">Too many HTTP request with status 5xx. Instance: ivershov-keystack-ctrl-03, frontend: grafana_server_front. Value: 8.333 requests during the last 5 minutes.</div>
<div class="t mono" style="left:169.200px;top:1185.9px;font-size:12.400px;letter-spacing:-0.090px">fingerprint</div>
<div class="t mono" style="left:345.800px;top:1185.9px;font-size:12.400px;letter-spacing:-0.090px">0e969b45010c00ab</div>
<div class="t mono" style="left:169.200px;top:1210.9px;font-size:12.400px;letter-spacing:-0.090px">labels.instance</div>
<div class="t mono" style="left:345.800px;top:1210.9px;font-size:12.400px;letter-spacing:-0.090px">10.224.133.210:9101</div>
<div class="t mono" style="left:169.200px;top:1235.9px;font-size:12.400px;letter-spacing:-0.090px">labels.node</div>
<div class="t mono" style="left:345.800px;top:1235.9px;font-size:12.400px;letter-spacing:-0.090px">ivershov-keystack-ctrl-03</div>
</div>
</body>
</html>
